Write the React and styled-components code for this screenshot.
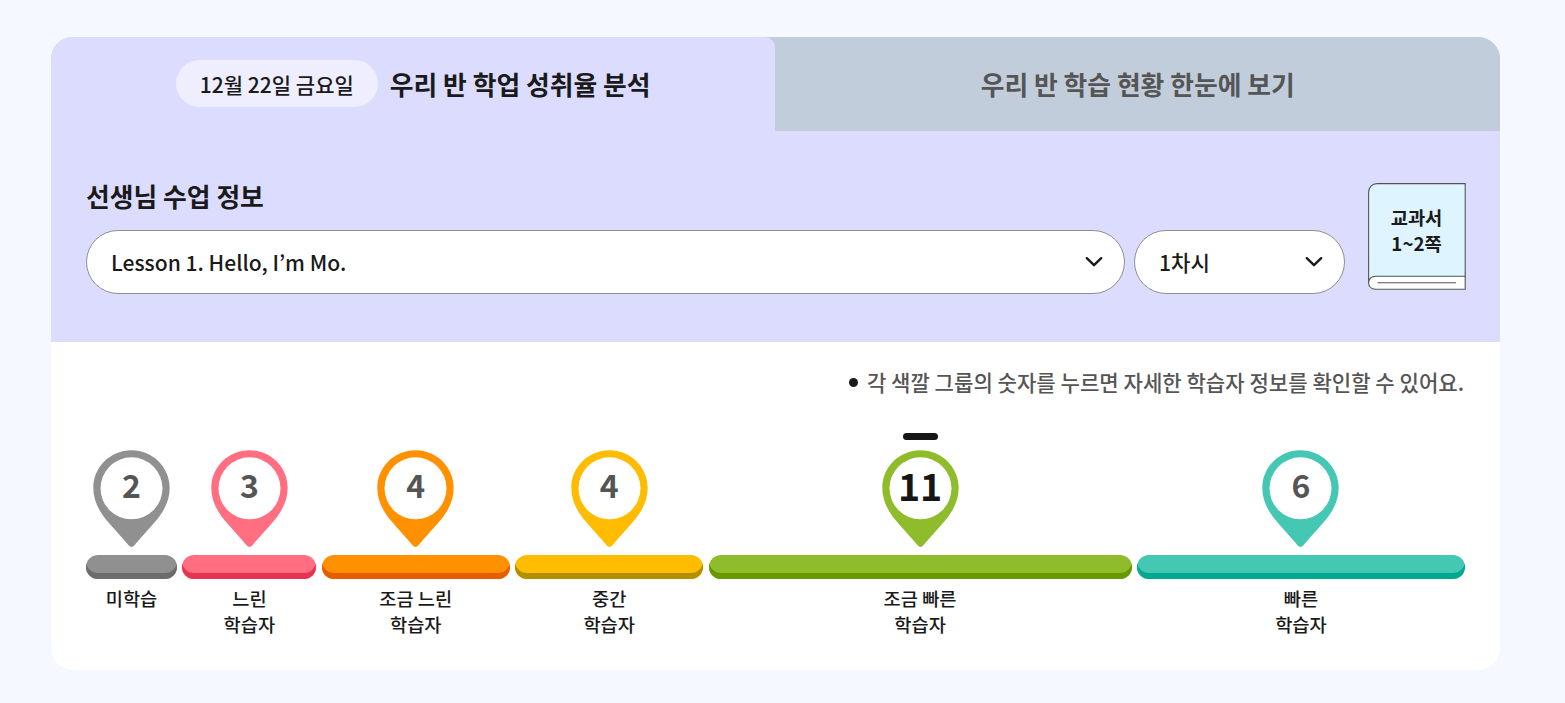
import styled, { createGlobalStyle } from 'styled-components'

const BLACK = '#1a1a1a'
const GRAY = '#555555'

const GlobalStyle = createGlobalStyle`
  * {
    box-sizing: border-box;
  }

  body {
    margin: 0;
    background: #f5f8ff;
    color: ${BLACK};
    font-family: 'Noto Sans CJK KR', sans-serif;
  }

  button {
    padding: 0;
    border: none;
    background: none;
    color: inherit;
    font-family: inherit;
    cursor: pointer;
  }
`

const PageWrapper = styled.main`
  height: 703px;
  padding: 37px 65px 0 51px;
`

const Card = styled.section`
  height: 633px;
  background: white;
  border-radius: 22px;
  overflow: hidden;
`

// * Tabs
const TabList = styled.div`
  display: grid;
  grid-template-columns: 724.4px 1fr;
  height: 93.5px;
  background: #c2cddb;
`

const Tab = styled.button`
  display: flex;
  justify-content: center;
  align-items: center;
  gap: 12px;
  font-size: 25.8px;
  font-weight: 700;
  line-height: 38px;
  color: ${(props) => (props.$active ? BLACK : GRAY)};
  background: ${(props) => (props.$active ? '#dcdcff' : '#c2cddb')};
  border-radius: ${(props) => (props.$active ? '0 10px 0 0' : '0')};
`

const TabText = styled.span`
  padding-top: 1px;
`

const DateBadge = styled.span`
  height: 47px;
  padding: 0 24px;
  border-radius: 24px;
  background: #eeeeff;
  font-size: 21px;
  font-weight: 500;
  line-height: 48px;
`

// * Lesson info
const LessonSection = styled.div`
  display: flex;
  justify-content: space-between;
  height: 211.5px;
  padding: 46.5px 34.5px 0 35px;
  background: #dcdcff;
`

const LessonTitle = styled.h2`
  margin: 0 0 15px;
  font-size: 25.8px;
  font-weight: 700;
  line-height: 38px;
`

const SelectRow = styled.div`
  display: flex;
  gap: 9.5px;
`

const SelectButton = styled.button`
  display: flex;
  justify-content: space-between;
  align-items: center;
  width: ${(props) => props.$width};
  height: 64px;
  padding: 0 20px 0 24px;
  border: 1px solid #8f8f8f;
  border-radius: 32px;
  background: white;
  font-size: 21.1px;
  font-weight: 500;
`

const Book = styled.div`
  display: grid;
  width: 98px;
  height: 108px;
  margin-top: 6px;

  > * {
    grid-area: 1 / 1;
  }
`

const BookText = styled.p`
  margin: 20.5px 0 0;
  font-size: 18.7px;
  font-weight: 700;
  line-height: 26px;
  text-align: center;
`

// * Learner groups
const ChartSection = styled.div`
  padding: 24px 35px 0;
`

const Notice = styled.p`
  display: flex;
  justify-content: flex-end;
  align-items: center;
  gap: 9px;
  margin: 0 1px 0 0;
  font-size: 21.1px;
  font-weight: 500;
  line-height: 33px;
  color: ${GRAY};

  &::before {
    content: '';
    width: 9px;
    height: 9px;
    border-radius: 50%;
    background: ${BLACK};
  }
`

const GroupList = styled.div`
  display: grid;
  grid-template-columns: 91px 134px 188px 188px 423px 328px;
  justify-content: space-between;
  margin-top: 34px;
`

const Group = styled.div`
  display: flex;
  flex-direction: column;
  align-items: center;
`

const ActiveMark = styled.span`
  width: 35px;
  height: 7px;
  border-radius: 4px;
  background: ${(props) => (props.$active ? '#161616' : 'transparent')};
`

const PinButton = styled.button`
  display: grid;
  justify-items: center;
  width: 77px;
  height: 98px;
  margin-top: 9.5px;

  > * {
    grid-area: 1 / 1;
  }
`

const Count = styled.span`
  font-size: ${(props) => (props.$active ? '37.6px' : '32px')};
  font-weight: 700;
  line-height: 69px;
  color: ${(props) => (props.$active ? '#161616' : GRAY)};
`

const Bar = styled.div`
  width: 100%;
  height: 23.5px;
  margin-top: 7.5px;
  border-radius: 12px;
  background: ${(props) => props.$color};
  box-shadow: inset 0 -6px 0 ${(props) => props.$shade};
`

const Label = styled.p`
  margin: 6.5px 0 0;
  font-size: 18.7px;
  font-weight: 500;
  line-height: 26px;
  text-align: center;
  white-space: pre-line;
`

const groups = [
  { count: 2, label: '미학습', color: '#909090', shade: '#6c6c6c' },
  { count: 3, label: '느린\n학습자', color: '#ff6f81', shade: '#e83253' },
  { count: 4, label: '조금 느린\n학습자', color: '#ff9000', shade: '#e65c00' },
  { count: 4, label: '중간\n학습자', color: '#ffbc00', shade: '#b38f00' },
  { count: 11, label: '조금 빠른\n학습자', color: '#8fbc2b', shade: '#669900', active: true },
  { count: 6, label: '빠른\n학습자', color: '#44c7b3', shade: '#00a88f' },
]

const Chevron = () => (
  <svg width="20" height="14" viewBox="0 0 20 14" fill="none">
    <path
      d="M2.8 3.2L10 10.2L17.2 3.2"
      stroke={BLACK}
      strokeWidth="2.4"
      strokeLinecap="round"
      strokeLinejoin="round"
    />
  </svg>
)

const Pin = ({ color }) => (
  <svg width="77" height="98" viewBox="0 0 77 98">
    <path
      d="M38.5 0.2C17.4 0.2 0.3 17 0.3 37.7C0.3 49.5 5.2 59.8 13 69.5C20.5 78.8 29.5 87.5 35.8 95.6C37.2 97.4 39.8 97.4 41.2 95.6C47.5 87.5 56.5 78.8 64 69.5C71.8 59.8 76.7 49.5 76.7 37.7C76.7 17 59.6 0.2 38.5 0.2Z"
      fill={color}
    />
    <circle cx="38.5" cy="38.3" r="31" fill="white" />
  </svg>
)

const BookCover = () => (
  <svg width="98" height="108" viewBox="0 0 98 108" fill="none" stroke={GRAY} strokeWidth="1.1">
    <path d="M0.6 100V9.5C0.6 4.5 4.2 0.6 9 0.6H97.2V94H7C3 94 0.6 96.5 0.6 100Z" fill="#def4ff" />
    <path d="M97.2 93.2H7.5C3.4 93.2 0.6 96 0.6 99.7C0.6 103.6 3.4 106.2 7.5 106.2H97.2Z" fill="white" />
    <path d="M9.5 99.7H88" />
  </svg>
)

export default function App() {
  return (
    <>
      <GlobalStyle />
      <PageWrapper>
        <Card>
          <TabList>
            <Tab $active>
              <DateBadge>12월 22일 금요일</DateBadge>
              <TabText>우리 반 학업 성취율 분석</TabText>
            </Tab>
            <Tab>
              <TabText>우리 반 학습 현황 한눈에 보기</TabText>
            </Tab>
          </TabList>

          <LessonSection>
            <div>
              <LessonTitle>선생님 수업 정보</LessonTitle>
              <SelectRow>
                <SelectButton $width="1038.5px">
                  Lesson 1. Hello, I’m Mo.
                  <Chevron />
                </SelectButton>
                <SelectButton $width="211px">
                  1차시
                  <Chevron />
                </SelectButton>
              </SelectRow>
            </div>
            <Book>
              <BookCover />
              <BookText>
                교과서
                <br />
                1~2쪽
              </BookText>
            </Book>
          </LessonSection>

          <ChartSection>
            <Notice>각 색깔 그룹의 숫자를 누르면 자세한 학습자 정보를 확인할 수 있어요.</Notice>
            <GroupList>
              {groups.map((group) => (
                <Group key={group.label}>
                  <ActiveMark $active={group.active} />
                  <PinButton>
                    <Pin color={group.color} />
                    <Count $active={group.active}>{group.count}</Count>
                  </PinButton>
                  <Bar $color={group.color} $shade={group.shade} />
                  <Label>{group.label}</Label>
                </Group>
              ))}
            </GroupList>
          </ChartSection>
        </Card>
      </PageWrapper>
    </>
  )
}
